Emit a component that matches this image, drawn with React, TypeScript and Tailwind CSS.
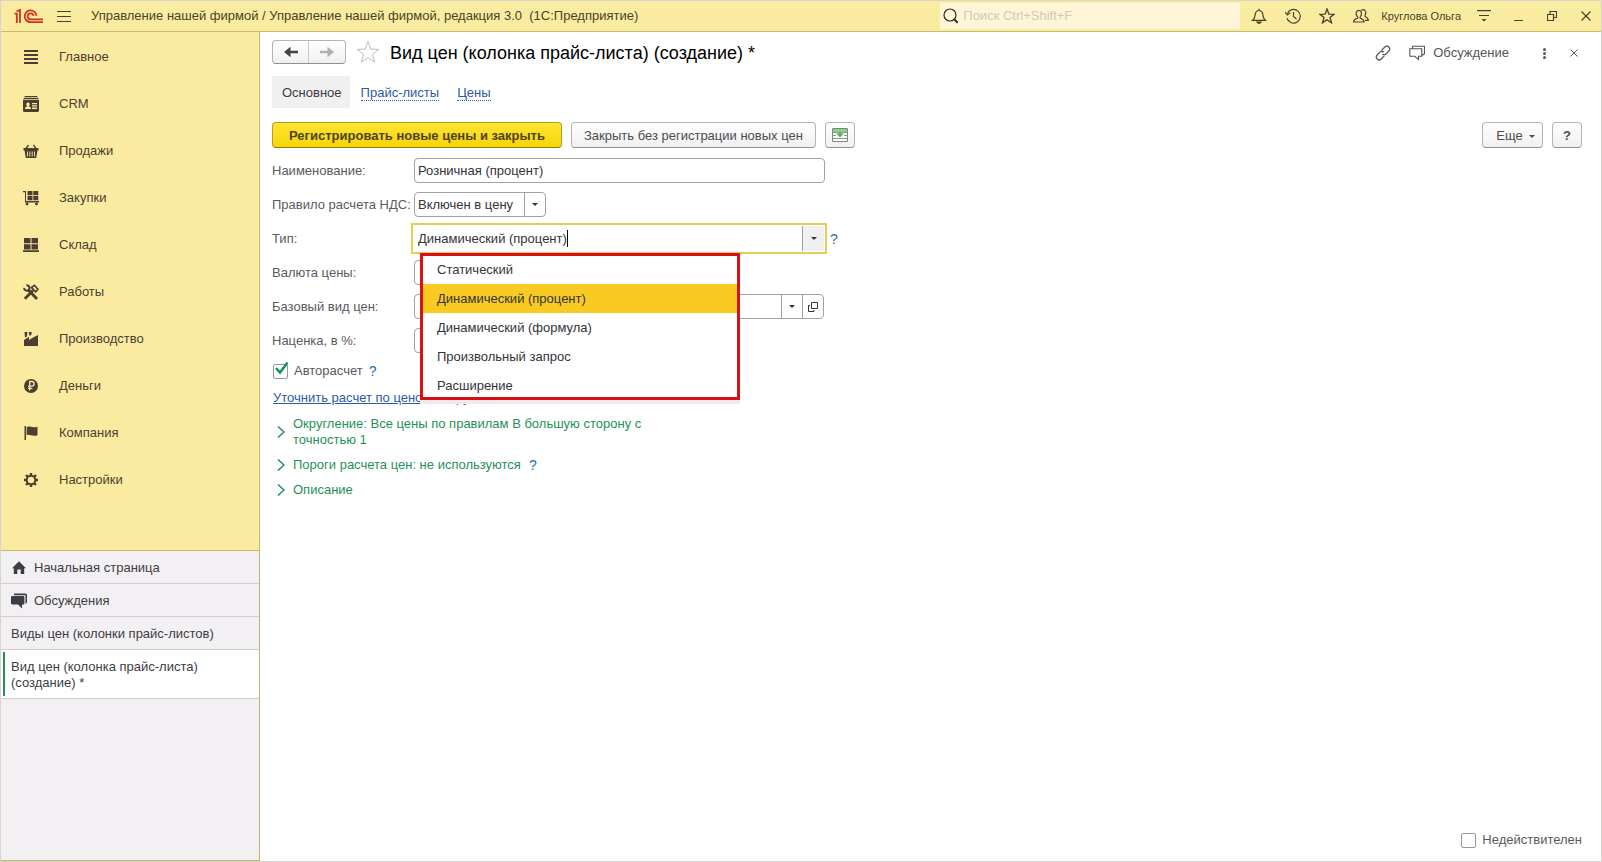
import { useState, type ReactNode } from "react";
import clsx from "clsx";

type IconProps = { className?: string };

const SECTIONS = [
  { title: "Главное", icon: LinesIcon },
  { title: "CRM", icon: CardIcon },
  { title: "Продажи", icon: BasketIcon },
  { title: "Закупки", icon: CartIcon },
  { title: "Склад", icon: BoxesIcon },
  { title: "Работы", icon: ToolsIcon },
  { title: "Производство", icon: FactoryIcon },
  { title: "Деньги", icon: RubleIcon },
  { title: "Компания", icon: FlagIcon },
  { title: "Настройки", icon: GearIcon },
];

const PRICE_TYPES = [
  "Статический",
  "Динамический (процент)",
  "Динамический (формула)",
  "Произвольный запрос",
  "Расширение",
];

function LinesIcon() {
  return (
    <svg viewBox="0 0 16 16" className="size-4" fill="currentColor">
      <path d="M1 1h14v2H1zM1 5h14v2H1zM1 9h14v2H1zM1 13h14v2H1z" />
    </svg>
  );
}

function CardIcon() {
  return (
    <svg viewBox="0 0 16 16" className="size-4" fill="currentColor">
      <path d="M2 0h12l1 1.2H1zM1 2h14l1 1.2H0z" />
      <path
        fillRule="evenodd"
        d="M0 4h16v10.5a1.5 1.5 0 0 1-1.5 1.5h-13A1.5 1.5 0 0 1 0 14.5zM3.3 8.3c0 1 .5 1.7 1 2.1-1.5.4-2.3 1-2.3 2.6h6c0-1.6-.8-2.2-2.3-2.6.5-.4 1-1.1 1-2.1 0-2.4-3.400-2.400-3.400 0zM9 7v1.300h5V7zM9 9.300v1.300h5V9.300zM9 11.600v1.300h5v-1.300z"
      />
    </svg>
  );
}

function BasketIcon() {
  return (
    <svg viewBox="0 0 16 16" className="size-4">
      <path d="M5.5 2 3 5.5M10.5 2 13 5.5" fill="none" stroke="currentColor" strokeWidth="1.3" />
      <path d="M.5 5h15v2.500h-1L13.200 15H2.800L1.500 7.500h-1z" fill="currentColor" />
      <path d="M4.500 8.500v5M6.800 8.500v5M9.200 8.500v5M11.500 8.500v5" stroke="#fbeba1" strokeWidth=".9" />
    </svg>
  );
}

function CartIcon() {
  return (
    <svg viewBox="0 0 16 16" className="size-4" fill="currentColor">
      <path d="M0 1h3v10h13v1.500H2V2.300H0zM4.500 1h5v4.200h-5zM10.300 1h5v4.200h-5zM4.500 6h5v4.200h-5zM10.300 6h5v4.200h-5z" />
      <circle cx="4" cy="14" r="1.4" />
      <circle cx="13.5" cy="14" r="1.4" />
    </svg>
  );
}

function BoxesIcon() {
  return (
    <svg viewBox="0 0 16 16" className="size-4" fill="currentColor">
      <path d="M1 1h6.500v5.300H1zM8.500 1H15v5.300H8.500zM1 7.300h6.500v5.300H1zM8.500 7.300H15v5.300H8.500zM0 13.300h16V15H0z" />
    </svg>
  );
}

function ToolsIcon() {
  return (
    <svg viewBox="0 0 16 16" className="size-4" fill="none" stroke="currentColor">
      <path d="M5 5.500 14 15" strokeWidth="2.8" />
      <path d="M3.400 1.300a2.700 2.700 0 1 1-2.300 2.600" strokeWidth="2" />
      <path d="M1.800 14.700 10 6.500" strokeWidth="2.8" />
      <path d="m8.500 3.500 3-2.200 3.400 4-2.200 2.500z" strokeWidth="1.7" />
    </svg>
  );
}

function FactoryIcon() {
  return (
    <svg viewBox="0 0 16 16" className="size-4" fill="currentColor">
      <path d="M1 15V9l5-3.300V9l5-3 4-2v11zM1.500 1h3l-.6 4.500L2 6.500zM5.800 1h3l-.5 3-2 .8z" />
    </svg>
  );
}

function RubleIcon() {
  return (
    <svg viewBox="0 0 16 16" className="size-4">
      <circle cx="8" cy="8" r="7" fill="currentColor" />
      <path
        d="M6.700 12.500v-9h2.100a2.300 2.300 0 0 1 0 4.600H5M5 10.300h4.300"
        fill="none"
        stroke="#fbeba1"
        strokeWidth="1.3"
      />
    </svg>
  );
}

function FlagIcon() {
  return (
    <svg viewBox="0 0 16 16" className="size-4" fill="currentColor">
      <path d="M1.500 1H3v14H1.500zM3.700 2.200c3-1.800 4.800 1.300 10.800-.4v8.400c-5.500 1.700-7.800-1.300-10.800 0z" />
    </svg>
  );
}

function GearIcon() {
  return (
    <svg viewBox="0 0 16 16" className="size-4" fill="none" stroke="currentColor">
      <circle cx="8" cy="8" r="4.3" strokeWidth="2" />
      <path
        d="M8 1v2.500M8 12.500V15M1 8h2.500M12.500 8H15M3 3l1.800 1.800M11.200 11.200 13 13M3 13l1.800-1.800M11.200 4.800 13 3"
        strokeWidth="2.4"
      />
    </svg>
  );
}

function Logo() {
  return (
    <svg viewBox="0 0 29 15" className="h-[15px] w-[29px]" fill="none" stroke="#d3311f" strokeWidth="1.8">
      <path d="M.5 4.700h2.300V14M2.500 2.500 6 .9V14" />
      <path d="M22.500 6.800a5.900 5.900 0 1 0-5.900 6.400H29" />
      <path d="M19.600 6.800a3 3 0 1 0-2.800 3.600H29" />
    </svg>
  );
}

function BellIcon() {
  return (
    <svg viewBox="0 0 16 16" className="size-4" fill="none" stroke="currentColor" strokeWidth="1.2">
      <path d="M1.500 12.400c2.500-1.600 2.300-4 2.800-6.500C4.800 3.500 6.200 2.500 8 2.500s3.200 1 3.700 3.400c.5 2.500.3 4.900 2.800 6.500zM8 .8v1.700" />
      <path d="M6 14h4l-1.200 1.200H7.200z" fill="currentColor" />
    </svg>
  );
}

function HistoryIcon() {
  return (
    <svg viewBox="0 0 16 16" className="size-4" fill="none" stroke="currentColor" strokeWidth="1.2">
      <path d="M2.300 5.500a6.800 6.800 0 1 1-.3 4.800M8.500 4v4.500l3 2.500" />
      <path d="m0 4 2.300 3 3-2.200" />
    </svg>
  );
}

function StarIcon({ className }: IconProps) {
  return (
    <svg viewBox="0 0 24 24" className={className} fill="none" stroke="currentColor">
      <path d="m12 1.500 2.800 7.600 8 .3-6.300 5 2.200 7.800-6.700-4.500-6.700 4.500 2.200-7.800-6.300-5 8-.3z" />
    </svg>
  );
}

function UsersIcon() {
  return (
    <svg viewBox="0 0 16 16" className="size-4" fill="none" stroke="currentColor" strokeWidth="1.2">
      <path d="M.7 14c0-3 1.500-3 3.700-3.800.5-.4.4-1-.2-1.700C2.300 6 3 2.300 5.800 2.300S9.300 6 7.500 8.500c-.6.7-.7 1.300-.2 1.700 2.200.8 3.700.8 3.700 3.800z" />
      <path d="M8.300 2.500C11 .5 13.700 3 12.600 6c-.5 1.300-1.200 1.700-.6 2.500.8.8 3.300 1 3.300 3.800H12" />
    </svg>
  );
}

function ChatIcon() {
  return (
    <svg viewBox="0 0 16 16" className="size-4" fill="none" stroke="currentColor" strokeWidth="1.1">
      <path d="M.8 3.800h12v7.500H9.500v3.300l-3.700-3.300h-5zM3.500 3.500V1.300h12v7.500l-2.300 1.500" />
    </svg>
  );
}

function ChatSolidIcon() {
  return (
    <svg viewBox="0 0 16 16" className="size-4" fill="currentColor">
      <path d="M3 .5h11.500A1.500 1.500 0 0 1 16 2v7.500L14.500 11V2.200H3z" />
      <path d="M1.200 3h11q1.200 0 1.200 1.200v6q0 1.300-1.300 1.300h-1V15.500L7 11.500H1.300Q0 11.500 0 10.200V4.200Q0 3 1.200 3z" />
    </svg>
  );
}

function HomeIcon() {
  return (
    <svg viewBox="0 0 16 16" className="size-4" fill="currentColor">
      <path d="m8 1.300 7 7h-1.800V14H9.700V9.500H6.300V14H2.800V8.300H1z" />
    </svg>
  );
}

function LinkIcon() {
  return (
    <svg viewBox="0 0 16 16" className="size-4" fill="none" stroke="currentColor" strokeWidth="1.2">
      <path d="m6.500 5.300 3.300-3.300c1.300-1.300 2.900-1.100 4 0s1.300 2.700 0 4L11 8.800c-1.200 1.200-2.600 1.200-3.800 0" />
      <path d="m9.500 10.700-3.300 3.300c-1.300 1.300-2.900 1.100-4 0s-1.300-2.700 0-4L5 7.200c1.200-1.200 2.600-1.200 3.800 0" />
    </svg>
  );
}

function CloseIcon({ className }: IconProps) {
  return (
    <svg viewBox="0 0 10 10" className={className} fill="none" stroke="currentColor" strokeWidth="1.2">
      <path d="m.5.5 9 9M9.500.5l-9 9" />
    </svg>
  );
}

function ArrowIcon({ className }: IconProps) {
  return (
    <svg viewBox="0 0 14 12" className={clsx("h-3 w-3.5", className)} fill="currentColor">
      <path d="M0 6 6.500.8v3.900H14v2.600H6.500v3.900z" />
    </svg>
  );
}

function Caret() {
  return (
    <svg viewBox="0 0 6 3" className="h-[3px] w-1.5" fill="currentColor">
      <path d="M0 0h6L3 3z" />
    </svg>
  );
}

function OpenIcon() {
  return (
    <svg viewBox="0 0 10 10" className="size-2.5" fill="none" stroke="currentColor">
      <path d="M3.500.5h6v6h-6zM2 3.500H.5v6h5.500V8" />
    </svg>
  );
}

function SheetIcon() {
  return (
    <svg viewBox="0 0 16 14" className="h-3.5 w-4">
      <path d="M.5.5h15v13H.5z" fill="#fff" stroke="#7f8a84" />
      <path d="M1 1h14v3H1z" fill="#8fcf86" />
      <path d="M1 4.500h14M1 7.500h3M12 7.500h3M1 10.500h14" stroke="#8f9994" />
      <path d="M4 5.500h3V4h2v1.500h3L8 9.500z" fill="#55b548" />
    </svg>
  );
}

function TopBar() {
  return (
    <header className="flex h-[31px] shrink-0 items-center border-b border-[#c6bc6c] bg-[#f9eca0] pl-[13px] pr-2.5 text-[#4a4229]">
      <Logo />
      <button aria-label="Меню" className="ml-3.5 flex w-3.5 flex-col gap-1">
        <span className="h-px bg-current" />
        <span className="h-px bg-current" />
        <span className="h-px bg-current" />
      </button>
      <h1 className="ml-5 flex-1 whitespace-pre text-[13px]">
        Управление нашей фирмой / Управление нашей фирмой, редакция 3.0{"  "}(1С:Предприятие)
      </h1>
      <label className="flex h-[26px] w-[300px] items-center gap-1 bg-[#fff6d8] pl-[3px]">
        <svg viewBox="0 0 16 16" className="size-4" fill="none" stroke="#2e2a1c">
          <circle cx="7" cy="7" r="6" strokeWidth="1.2" />
          <path d="m11.500 11.500 3.200 3.300" strokeWidth="2" />
        </svg>
        <input
          aria-label="Поиск"
          placeholder="Поиск Ctrl+Shift+F"
          className="min-w-0 flex-1 bg-transparent text-[13px] outline-none placeholder:text-[#cfc9b4]"
        />
      </label>
      <div className="ml-[11px] flex items-center gap-[18px]">
        <button aria-label="Уведомления"><BellIcon /></button>
        <button aria-label="История"><HistoryIcon /></button>
        <button aria-label="Избранное"><StarIcon className="size-4 stroke-2" /></button>
        <button className="flex items-center gap-3 text-[11px]">
          <UsersIcon />
          Круглова Ольга
        </button>
      </div>
      <button aria-label="Настройка панели" className="ml-4">
        <svg viewBox="0 0 14 12" className="h-3 w-3.5" fill="none" stroke="currentColor">
          <path d="M0 .6h14M2 5.500h10" strokeWidth="1.2" />
          <path d="M4.500 9h5L7 11.500z" fill="currentColor" stroke="none" />
        </svg>
      </button>
      <button aria-label="Свернуть" className="ml-[23px] flex h-2.5 w-[9px] items-end">
        <span className="h-px w-full bg-current" />
      </button>
      <button aria-label="Восстановить" className="ml-6">
        <svg viewBox="0 0 10 10" className="size-2.5" fill="none" stroke="currentColor" strokeWidth="1.2">
          <path d="M.5 3.500h6v6h-6zM3 3.500v-3h6.500v6h-3" />
        </svg>
      </button>
      <button aria-label="Закрыть" className="ml-6">
        <CloseIcon className="size-2.5" />
      </button>
    </header>
  );
}

function OpenWindow({ children, active }: { children: ReactNode; active?: boolean }) {
  return (
    <li className={clsx("border-b border-[#d0ced0]", active && "bg-white")}>
      <a
        href="#"
        className={clsx(
          "relative flex items-center gap-[7px] pb-[7px] pl-2.5 pr-8 pt-[9px]",
          active &&
            "before:absolute before:inset-y-0.5 before:left-0.5 before:w-0.5 before:bg-[#2b8a5c]",
        )}
      >
        {children}
      </a>
    </li>
  );
}

function Sidebar() {
  return (
    <aside className="flex w-[259px] shrink-0 flex-col border-b border-r border-[#c0b76a] bg-[#f2f0f3]">
      <nav className="border-b border-[#c6bc6c] bg-[#fbeba1] pb-[47px] pt-px text-[#4a3f30]">
        {SECTIONS.map(({ title, icon: Icon }) => (
          <a key={title} href="#" className="flex h-[47px] items-center gap-5 pl-[22px]">
            <Icon />
            {title}
          </a>
        ))}
      </nav>
      <ul className="text-[#3d3d44]">
        <OpenWindow>
          <HomeIcon />
          Начальная страница
        </OpenWindow>
        <OpenWindow>
          <ChatSolidIcon />
          Обсуждения
        </OpenWindow>
        <OpenWindow>Виды цен (колонки прайс-листов)</OpenWindow>
        <OpenWindow active>Вид цен (колонка прайс-листа) (создание) *</OpenWindow>
      </ul>
    </aside>
  );
}

function TitleBar() {
  return (
    <div className="flex h-6 items-center">
      <div className="flex h-6 rounded-sm border border-[#b3b3b8] border-b-[#8f8f94] bg-linear-to-b from-white to-[#f0f0f0]">
        <button aria-label="Назад" className="flex w-9 items-center justify-center border-r border-[#c8c8cc] text-[#454545]">
          <ArrowIcon />
        </button>
        <button aria-label="Вперед" className="flex w-9 items-center justify-center text-[#b0b0b0]">
          <ArrowIcon className="rotate-180" />
        </button>
      </div>
      <button aria-label="В избранное" className="ml-2.5 text-[#bcbcc0]">
        <StarIcon className="size-6" />
      </button>
      <h2 className="ml-2.5 flex-1 pt-0.5 text-[18px] leading-6 text-black">
        Вид цен (колонка прайс-листа) (создание) *
      </h2>
      <div className="flex items-center pt-0.5 text-[#55555a]">
        <button aria-label="Получить ссылку"><LinkIcon /></button>
        <button className="ml-[18px] flex items-center gap-2">
          <ChatIcon />
          Обсуждение
        </button>
        <button aria-label="Еще действия" className="ml-[34px] flex w-[3px] flex-col gap-px">
          <span className="size-[3px] rounded-full bg-current" />
          <span className="size-[3px] rounded-full bg-current" />
          <span className="size-[3px] rounded-full bg-current" />
        </button>
        <button aria-label="Закрыть форму" className="ml-6 mr-1">
          <CloseIcon className="size-2" />
        </button>
      </div>
    </div>
  );
}

function Tabs() {
  return (
    <nav className="mt-3 flex h-8 items-center text-[#2a5aa8]">
      <a href="#" className="flex h-8 items-center bg-[#f0f0f0] pl-2.5 pr-2 pt-0.5 text-[#3c3c40]">
        Основное
      </a>
      <a href="#" className="ml-[11px] mt-0.5 border-b border-dotted border-current leading-[15px]">
        Прайс-листы
      </a>
      <a href="#" className="ml-[18px] mt-0.5 border-b border-dotted border-current leading-[15px]">
        Цены
      </a>
    </nav>
  );
}

const BUTTON =
  "flex h-[26px] items-center justify-center rounded-sm border border-[#b4b4ba] border-b-[#8f8f96] bg-linear-to-b from-white to-[#f0f0f1] pt-0.5 text-[#4c4c50]";

function CommandBar() {
  return (
    <div className="mt-3.5 flex items-center gap-[9px]">
      <button className="flex h-[26px] items-center rounded-sm border border-[#b39f1d] border-b-[#8f7e12] bg-linear-to-b from-[#ffe530] to-[#f6d500] px-4 pt-0.5 font-bold text-[#4f4313]">
        Регистрировать новые цены и закрыть
      </button>
      <button className={clsx(BUTTON, "px-3")}>Закрыть без регистрации новых цен</button>
      <button aria-label="Загрузить цены" className={clsx(BUTTON, "w-[30px] pb-0.5")}>
        <SheetIcon />
      </button>
      <button className={clsx(BUTTON, "ml-auto w-[61px] gap-1.5 pl-1.5")}>
        Еще
        <Caret />
      </button>
      <button aria-label="Справка" className={clsx(BUTTON, "w-[30px] font-bold text-[#2c2c30]")}>
        ?
      </button>
    </div>
  );
}

function Help() {
  return (
    <button type="button" aria-label="Подсказка" className="text-[14px] leading-4 text-[#2470b0]">
      ?
    </button>
  );
}

function Field({ id, label, children }: { id: string; label: string; children: ReactNode }) {
  return (
    <div className="flex h-[25px] items-center">
      <label htmlFor={id} className="w-[142px] shrink-0 whitespace-nowrap text-[#5a5a60]">
        {label}
      </label>
      {children}
    </div>
  );
}

const BOX = "flex h-[25px] rounded-sm border border-[#a0a0a6] bg-white text-[#333338]";
const CELL = "flex w-[21px] shrink-0 items-center justify-center border-l border-[#a0a0a6]";

function TypeField() {
  const [value, setValue] = useState(PRICE_TYPES[1]);

  return (
    <>
      <div className="relative flex h-[25px] w-[410px] bg-white text-[#333338] outline-2 outline-offset-1 outline-[#e3cd55]">
        <input
          id="type"
          role="combobox"
          aria-expanded="true"
          aria-controls="type-list"
          value={value}
          onChange={(e) => setValue(e.target.value)}
          className="min-w-0 flex-1 pl-1 caret-transparent outline-none"
        />
        <button type="button" aria-label="Выбрать тип" className="flex w-[22px] items-center justify-center border-l border-[#a0a0a6] bg-[#f0f0f0]">
          <Caret />
        </button>
        {/* text cursor after the typed value */}
        <div className="pointer-events-none absolute bottom-1 left-[153px] top-1 w-px bg-black" />

        <div className="absolute left-1.5 top-[29px] z-10 w-80 border-b-4 border-[#f1e9ec] bg-white">
          <ul id="type-list" role="listbox">
            {PRICE_TYPES.map((type) => (
              <li
                key={type}
                role="option"
                aria-selected={type === value}
                onClick={() => setValue(type)}
                className={clsx("flex h-[29px] items-center pl-[17px]", type === value && "bg-[#f9cb22]")}
              >
                {type}
              </li>
            ))}
          </ul>
          <div className="pointer-events-none absolute inset-x-0 -top-0.5 bottom-0 border-3 border-[#d81115]" />
        </div>
      </div>
      <span className="ml-1.5 flex">
        <Help />
      </span>
    </>
  );
}

function Group({ children }: { children: ReactNode }) {
  return (
    <div className="flex w-[400px] items-center gap-2 text-[#1f9157]">
      <svg viewBox="0 0 8 12" className="ml-[5px] h-3 w-2 shrink-0" fill="none" stroke="currentColor" strokeWidth="1.5">
        <path d="m1 .5 6 5.500-6 5.500" />
      </svg>
      {children}
    </div>
  );
}

function PriceForm() {
  const [auto, setAuto] = useState(true);

  return (
    <form className="mt-2.5 flex flex-col gap-2.5">
      <div className="flex flex-col gap-[9px]">
        <Field id="name" label="Наименование:">
          <input id="name" defaultValue="Розничная (процент)" className={clsx(BOX, "w-[411px] px-[3px] outline-none")} />
        </Field>
        <Field id="vat" label="Правило расчета НДС:">
          <div className={clsx(BOX, "w-[132px]")}>
            <select id="vat" className="min-w-0 flex-1 appearance-none pl-[3px] outline-none">
              <option>Включен в цену</option>
            </select>
            <span className={clsx(CELL, "pointer-events-none")}><Caret /></span>
          </div>
        </Field>
        <Field id="type" label="Тип:">
          <TypeField />
        </Field>
        <Field id="currency" label="Валюта цены:">
          <select id="currency" className={clsx(BOX, "w-[132px] appearance-none")} />
        </Field>
        <Field id="base" label="Базовый вид цен:">
          <div className={clsx(BOX, "w-[410px]")}>
            <select id="base" className="min-w-0 flex-1 appearance-none outline-none" />
            <span className={CELL}><Caret /></span>
            <button type="button" aria-label="Открыть" className={CELL}><OpenIcon /></button>
          </div>
        </Field>
        <Field id="markup" label="Наценка, в %:">
          <input id="markup" className={clsx(BOX, "w-[132px]")} />
        </Field>
      </div>
      <div className="flex h-4 items-center text-[#5a5a60]">
        <label className="relative flex items-center gap-1.5">
          <input
            type="checkbox"
            checked={auto}
            onChange={(e) => setAuto(e.target.checked)}
            className="ml-px size-[15px] appearance-none rounded-xs border border-[#98989e] bg-white"
          />
          {auto && (
            <svg viewBox="0 0 14 13" className="absolute -top-px left-[3px] h-[13px] w-3.5" fill="none" stroke="#0f9455" strokeWidth="2.4">
              <path d="m1 6 4 4.500L12.500.5" />
            </svg>
          )}
          Авторасчет
        </label>
        <span className="ml-1.5 flex">
          <Help />
        </span>
      </div>
      <a href="#" className="ml-px mt-px self-start text-[#2a5aa8] underline underline-offset-1">
        Уточнить расчет по ценовым группам
      </a>
      <div className="flex flex-col gap-[9px]">
        <Group>Округление: Все цены по правилам В большую сторону с точностью 1</Group>
        <Group>
          Пороги расчета цен: не используются
          <Help />
        </Group>
        <Group>Описание</Group>
      </div>
    </form>
  );
}

export default function App() {
  return (
    <div className="flex min-h-screen flex-col border border-[#d6d4cc] bg-white font-['Liberation_Sans',Arial,sans-serif] text-[13px] leading-4">
      <TopBar />
      <div className="flex flex-1">
        <Sidebar />
        <main className="flex flex-1 flex-col pb-[13px] pl-3 pr-[19px] pt-2">
          <TitleBar />
          <Tabs />
          <CommandBar />
          <PriceForm />
          <label className="mt-auto flex items-center gap-1.5 self-end text-[#5a5a60]">
            <input type="checkbox" className="size-[15px] appearance-none rounded-xs border border-[#98989e] bg-white" />
            Недействителен
          </label>
        </main>
      </div>
    </div>
  );
}
